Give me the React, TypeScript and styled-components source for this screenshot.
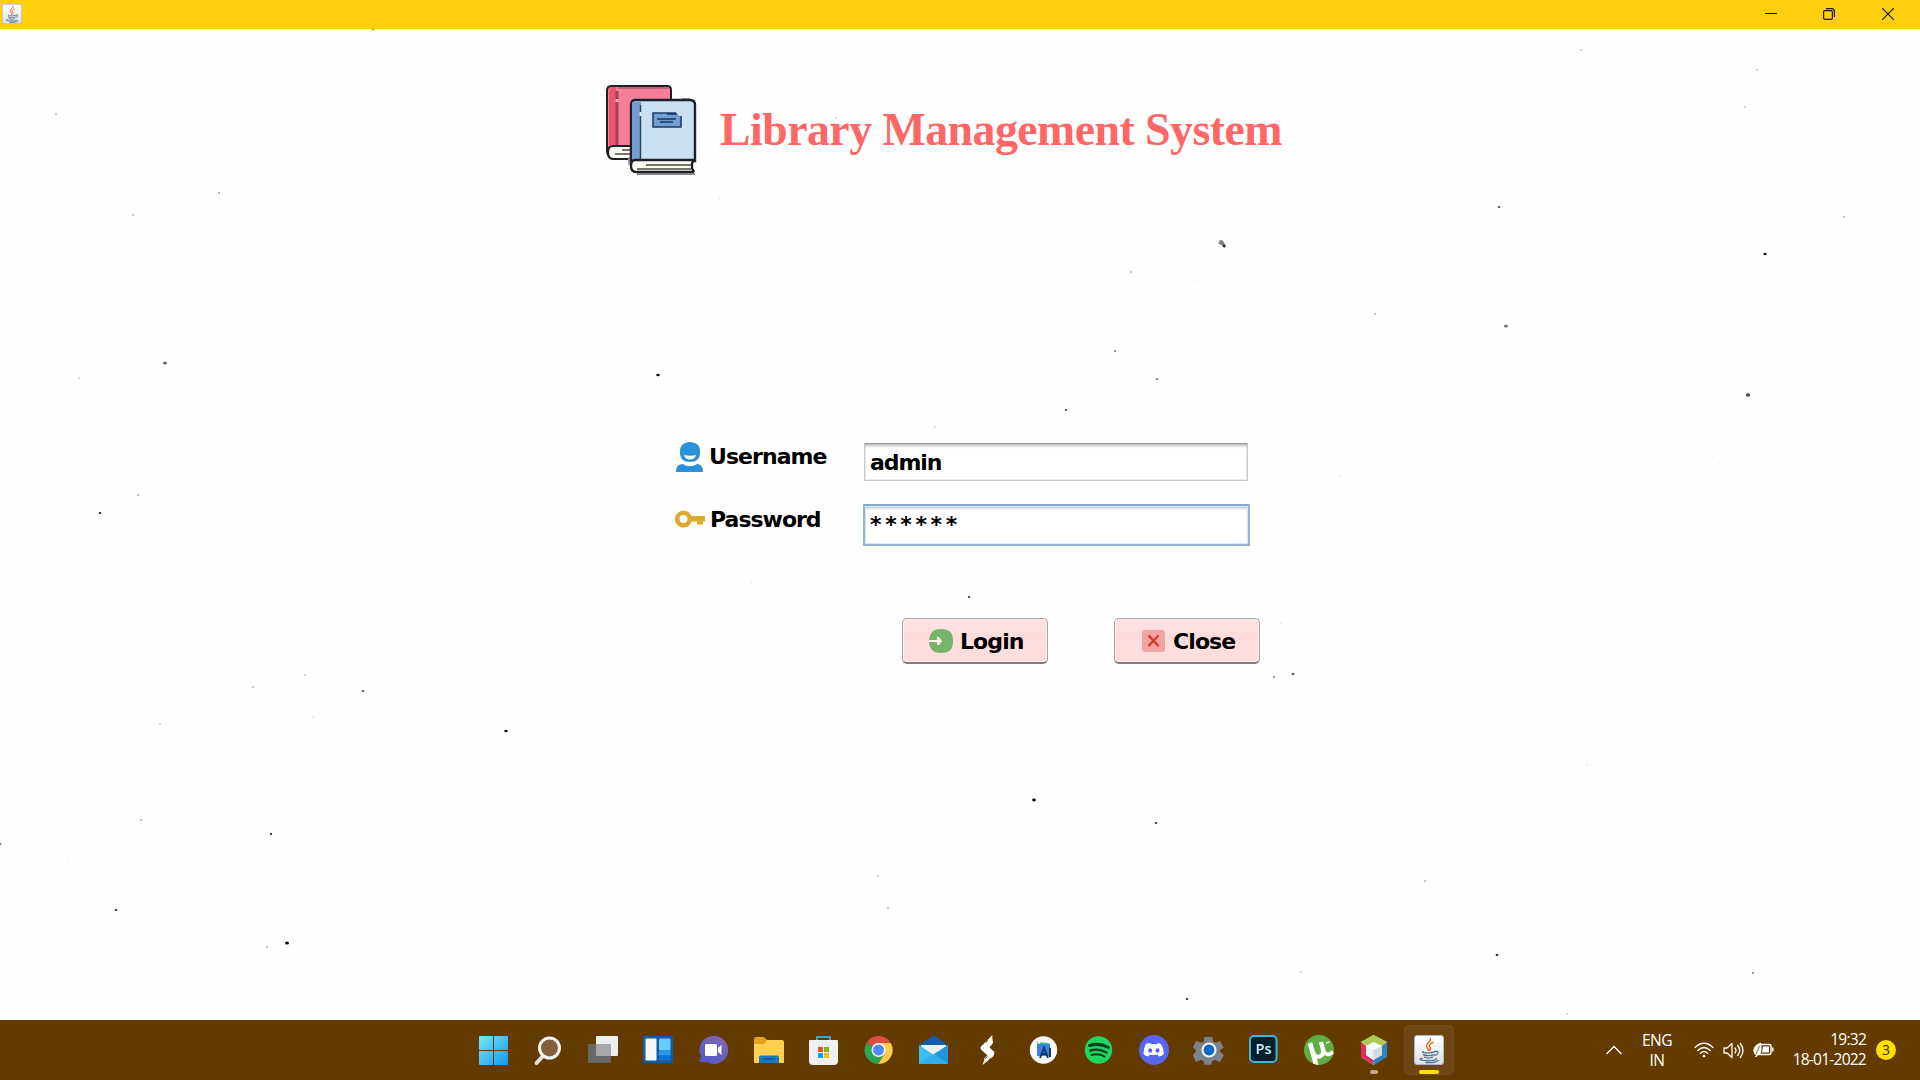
import React from "react";
import styled, { createGlobalStyle } from "styled-components";

const Global = createGlobalStyle`
  * { box-sizing: border-box; }
  body { margin: 0; background: #fefefe; overflow: hidden; }
  svg { display: block; flex: none; }
`;

const uiFont = `"DejaVu Sans", Verdana, sans-serif`;
const trayFont = `"Open Sans", "Noto Sans", sans-serif`;

const Screen = styled.div`
  width: 1920px;
  height: 1080px;
  display: flex;
  flex-direction: column;
  position: relative;
  background: #fefefe;
`;

const TitleBar = styled.header`
  height: 29px;
  flex: none;
  background: #ffcf0d;
  display: flex;
  justify-content: space-between;
  padding: 4px 3px 0 2px;
`;

const WindowButtons = styled.div`
  display: flex;
  margin-top: -4px;
`;

const WindowButton = styled.button`
  width: 58.5px;
  height: 28px;
  border: 0;
  padding: 0;
  background: transparent;
  display: flex;
  align-items: center;
  justify-content: center;
`;

const Body = styled.main`
  flex: 1;
  min-height: 0;
  display: flex;
  flex-direction: column;
`;

const Brand = styled.div`
  display: flex;
  padding: 55px 0 0 606px;
  height: 180px;
  gap: 23px;
`;

const Title = styled.h1`
  margin: 20px 0 0;
  font: bold 45.8px/52px "Liberation Serif", "Times New Roman", serif;
  letter-spacing: -0.52px;
  color: #ff6666;
  white-space: nowrap;
`;

const Form = styled.form`
  padding: 232px 0 0 675px;
  display: flex;
  flex-direction: column;
`;

const FormRow = styled.div<{ $h: number }>`
  display: grid;
  grid-template-columns: 188px 388px;
  height: ${(p) => p.$h}px;
  align-items: start;
`;

const Label = styled.label<{ $spacing: number }>`
  display: flex;
  gap: 5px;
  height: 32px;
  align-items: center;
  font: bold 22px/32px ${uiFont};
  letter-spacing: ${(p) => p.$spacing}px;
  color: #000;
`;

const Field = styled.div<{ $focused?: boolean }>`
  width: ${(p) => (p.$focused ? 387 : 384)}px;
  height: ${(p) => (p.$focused ? 42 : 38)}px;
  margin: ${(p) => (p.$focused ? "0" : "2px 0 0 1px")};
  padding: ${(p) => (p.$focused ? "5px 5px" : "5px 5px")};
  border: ${(p) => (p.$focused ? "2px solid #93b3d3" : "1px solid #c9c9c9")};
  border-top-color: ${(p) => (p.$focused ? "#86a8cb" : "#949494")};
  outline: ${(p) => (p.$focused ? "1px solid #dbe8f3" : "none")};
  outline-offset: -3px;
  box-shadow: inset 0 3px 3px -1px ${(p) => (p.$focused ? "#b0b6bd" : "#bdbdbd")}, inset 0 0 0 1px #eeeeee;
  background: #fff;
  font: bold 22px/28px ${uiFont};
  letter-spacing: ${(p) => (p.$focused ? 3.65 : -1.1)}px;
  color: #000;
`;

const Actions = styled.div`
  display: flex;
  gap: 66px;
  padding: 54px 0 0 227px;
`;

const Button = styled.button<{ $left: number; $gap: number }>`
  width: 146px;
  height: 46px;
  display: flex;
  align-items: center;
  gap: ${(p) => p.$gap}px;
  padding: 2px 0 0 ${(p) => p.$left}px;
  border: 1.5px solid #a8a0a2;
  border-bottom: 2px solid #85797b;
  border-radius: 5px;
  background: linear-gradient(#ffe4e4, #ffdada 48%, #ffdfdf 52%, #ffdcdc);
  box-shadow: inset 0 0 0 1px #ffeeee;
  font: bold 22px/30px ${uiFont};
  letter-spacing: -0.9px;
  color: #000;
  & > svg { margin-top: -2px; }
`;

const Specks = styled.svg`
  position: absolute;
  left: 0;
  top: 29px;
  pointer-events: none;
`;

const Taskbar = styled.footer`
  height: 60px;
  flex: none;
  background: #633a00;
  display: flex;
  justify-content: space-between;
`;

const Apps = styled.nav`
  display: flex;
  padding: 5px 0 0 469px;
  gap: 5px;
`;

const AppSlot = styled.div<{ $active?: boolean }>`
  width: 50px;
  height: 50px;
  border-radius: 5px;
  background: ${(p) => (p.$active ? "#6d4613" : "transparent")};
  box-shadow: ${(p) => (p.$active ? "inset 0 0 0 1px #734e1d" : "none")};
  display: flex;
  flex-direction: column;
  align-items: center;
  padding-top: 9px;
`;

const Indicator = styled.span<{ $active?: boolean }>`
  margin-top: 4px;
  width: ${(p) => (p.$active ? 20 : 8)}px;
  height: 4px;
  border-radius: 2px;
  background: ${(p) => (p.$active ? "#ffe100" : "#c0a68a")};
`;

const Tray = styled.div`
  display: flex;
  align-items: center;
  padding-right: 24px;
  color: #fff;
  font: 15.6px/20px ${trayFont};
`;

const Language = styled.div`
  width: 40px;
  margin: -1px 17px 0 15px;
  text-align: center;
  letter-spacing: -0.6px;
`;

const Status = styled.div`
  display: flex;
  gap: 9px;
`;

const Clock = styled.div`
  width: 92px;
  margin-top: -2px;
  text-align: right;
  letter-spacing: -0.8px;
  white-space: nowrap;
`;

const Badge = styled.span`
  width: 20px;
  height: 20px;
  margin-left: 10px;
  border-radius: 50%;
  background: #ffe100;
  color: #3c2c00;
  font: 14px/20px ${trayFont};
  text-align: center;
`;

const BooksLogo = () => (
  <svg width="91" height="92" viewBox="0 0 91 92">
    <path d="M5 2h56q4 0 4 4v66H6q-5 0-5-5V7q0-5 4-5Z" fill="#f57f98" stroke="#1d2029" strokeWidth="2" />
    <path d="M4 3h6v58H3V8Z" fill="#f0536c" />
    <path d="M11 7v54" stroke="#a83e56" strokeWidth="3" />
    <path d="M11 15v3" stroke="#ffb5c4" strokeWidth="3" />
    <path d="M12 4h50" stroke="#bc6377" strokeWidth="2" />
    <path d="M25 62H7q-5 0-5 6 0 7 5 7h18Z" fill="#fffdf0" stroke="#1d2029" strokeWidth="2.2" />
    <path d="M16 66h10M9 70h16" stroke="#77756e" strokeWidth="2" />
    <path d="M76 15h8M23 73v8" stroke="#9b9ba1" strokeWidth="2" />
    <path d="M29 16h55q5 0 5 5v56H25V21q0-5 4-5Z" fill="#c9dff2" stroke="#1d2029" strokeWidth="2.4" />
    <path d="M26 18h9v59h-9Z" fill="#719dd0" />
    <path d="M34.500 21v56" stroke="#28405f" strokeWidth="1.400" />
    <path d="M34.500 28v4" stroke="#dfeefb" strokeWidth="2" />
    <path d="M47 29h23l5 4v10H47Z" fill="#719dd0" />
    <path d="M70 29H47v14h28V32" fill="none" stroke="#1d3d66" strokeWidth="1.600" />
    <path d="M61 30h10M51 35h19M54 38h13" stroke="#17345c" strokeWidth="1.500" />
    <path d="M89 76H29q-4 0-4 6 0 6 5 6h59l-3-4v-5Z" fill="#fffff5" />
    <path d="M89 76H29q-4 0-4 6 0 6 5 6h58M88 88l-2-4v-5l2-3" fill="none" stroke="#1d2029" strokeWidth="2.400" />
    <path d="M40 81h45M31 85h54" stroke="#77756e" strokeWidth="2" />
    <path d="M31 90h58" stroke="#85858b" strokeWidth="2" />
  </svg>
);

const UserIcon = () => (
  <svg width="29" height="32" viewBox="0 0 29 32">
    <path d="M15 1C9 1 5 4.500 5 10v2c0 6 4 9 10 9s10-3 10-9v-2c0-5.500-4-9-10-9Z" fill="#2b91dc" />
    <path d="M9 14q6 1.400 12 0c-.7 3-3 4.500-6 4.500S9.700 17 9 14Z" fill="#fff" />
    <path d="M1 31c0-5 2-8 7-8 4 3 10 3 14 0 4 0 6 3 6 8Z" fill="#2b91dc" />
  </svg>
);

const KeyIcon = () => (
  <svg width="30" height="20" viewBox="0 0 30 20">
    <circle cx="8.500" cy="9" r="6.300" fill="none" stroke="#dbab2f" strokeWidth="4.600" />
    <path d="M15 6h15v5.500h-2v3h-6v-3h-7Z" fill="#dbab2f" />
  </svg>
);

const LoginIcon = () => (
  <svg width="24" height="24" viewBox="0 0 24 24">
    <path d="M12 0c9 0 12 4 12 12s-3 12-12 12C5 24 1 21 0 14V11C1 3 5 0 12 0Z" fill="#77b467" />
    <path d="M0 11h8V8h2l3 4-3 4H8v-3H0Z" fill="#fff2ea" />
  </svg>
);

const CloseIcon = () => (
  <svg width="23" height="22" viewBox="0 0 23 22">
    <rect width="23" height="22" rx="3" fill="#f3a4a0" />
    <path d="m6.500 5.500 10 10.500M16.500 5.500 6.500 16" stroke="#d7382e" strokeWidth="2.400" />
  </svg>
);

const JavaIcon = ({ size }: { size: number }) => (
  <svg width={size} height={size} viewBox="0 0 30 30">
    <defs>
      <linearGradient id="javaTile" x2="0" y2="1">
        <stop stopColor="#ffffff" />
        <stop offset="1" stopColor="#dedfe3" />
      </linearGradient>
    </defs>
    <rect x=".5" y=".5" width="29" height="29" rx="2.500" fill="url(#javaTile)" stroke="#a9b9c9" />
    <g fill="none" strokeLinecap="round">
      <path d="M16.500 3.500c1 3.500-5 4.500-4 8 .4 1.500 2 2 2 4M19 7.500c-3 1-5 3-3 5 1 1.200.5 2-.5 3" stroke="#e5702c" strokeWidth="1.500" />
      <path d="M9 16.500c-3 1.500 9 2 12 .2M9.500 19.500c1 1.400 8 1.500 10.500.2M10.500 22.200c2 1 6 1 8 0M21.500 16.300c3.500-.5 3 3-.5 4M8 23.300c-6 1.500 4 2.700 9 2.300 4-.3 6-1 5-2M12 27.500c5 .5 10-.3 12-2" stroke="#4f7592" strokeWidth="1.350" />
    </g>
  </svg>
);

const icons: React.ReactNode[] = [
  <>
    <defs>
      <linearGradient id="win" x1="1" y1="2" x2="30" y2="31" gradientUnits="userSpaceOnUse">
        <stop stopColor="#74e8ff" />
        <stop offset="1" stopColor="#1597f3" />
      </linearGradient>
    </defs>
    <path d="M1 3q0-1 1-1h13v14H1ZM16 2h13q1 0 1 1v13H16ZM1 17h14v14H2q-1 0-1-1ZM16 17h14v13q0 1-1 1H16Z" fill="url(#win)" />
  </>,
  <>
    <path d="m10 22-6.500 7" stroke="#e1dfdc" strokeWidth="4" strokeLinecap="round" />
    <circle cx="16.500" cy="14" r="10" fill="#83603a" stroke="#f5f4f2" strokeWidth="3" />
  </>,
  <>
    <path d="M8 3q0-1 1-1h20q1 0 1 1v18q0 1-1 1H8Z" fill="#eeeeee" />
    <path d="M0 11q0-1 1-1h21q1 0 1 1v17q0 1-1 1H1q-1 0-1-1Z" fill="#676767" />
    <path d="M8 10h14q1 0 1 1v11H8Z" fill="#a7a7a7" />
  </>,
  <>
    <rect x="0" y="2" width="30" height="27" rx="1.500" fill="#105ba5" />
    <rect x="2.500" y="4.500" width="11" height="22" rx="1" fill="#f5f7fa" />
    <rect x="16" y="4.500" width="11.500" height="12" rx="1" fill="#64ccff" />
    <rect x="16" y="17" width="11.500" height="4.500" fill="#289bed" />
    <rect x="16" y="22" width="11.500" height="4.500" rx="1" fill="#1373ca" />
  </>,
  <>
    <defs>
      <linearGradient id="chat" x1=".8" x2=".2" y2="1">
        <stop stopColor="#8368b1" />
        <stop offset="1" stopColor="#5059cb" />
      </linearGradient>
    </defs>
    <path d="M16 2a14 14 0 1 1-7 26H2q-1 0-.5-1.500l1.500-4A14 14 0 0 1 16 2Z" fill="url(#chat)" />
    <rect x="7" y="10" width="12" height="12" rx="1.500" fill="#fff" />
    <path d="m20 14 3.500-3v10L20 18Z" fill="#fff" />
  </>,
  <>
    <path d="M1 5q0-2 2-2h8l3 3v5H1Z" fill="#e4a11b" />
    <path d="M1 10h10l3-4h15q2 0 2 2v21H2q-1 0-1-1Z" fill="#ffd050" />
    <path d="M6 29v-6q0-1.500 1.500-1.500h17q1.500 0 1.500 1.500v6Z" fill="#1579c4" />
    <path d="M10 25h12" stroke="#0c4d8c" strokeWidth="1.300" />
  </>,
  <>
    <path d="M9 7V3h13v4" fill="none" stroke="#35a7d4" strokeWidth="2" />
    <path d="M1 7q0-1 1-1h27q1 0 1 1v20q0 4-4 4H5q-4 0-4-4Z" fill="#f0f0f0" />
    <path d="M10 13h5v5h-5Z" fill="#ee5128" />
    <path d="M16 13h5v5h-5Z" fill="#7eb900" />
    <path d="M10 19h5v5h-5Z" fill="#08a4ed" />
    <path d="M16 19h5v5h-5Z" fill="#fdb800" />
  </>,
  <>
    <path d="M15.500 16 3.400 9A14 14 0 0 1 27.700 9Z" fill="#dc4c40" />
    <path d="M15.500 16 3.400 9a14 14 0 0 0 12.100 21l6-10.500Z" fill="#30a354" />
    <path d="M15.500 9h12.200a14 14 0 0 1-12.200 21l6-10.500Z" fill="#fdce4d" />
    <circle cx="15.500" cy="16" r="7" fill="#f6f6f4" />
    <circle cx="15.500" cy="16" r="5.500" fill="#4c8bf5" />
  </>,
  <>
    <path d="m1 11 14-9q1-.5 2 0l13 9v5H1Z" fill="#105eb2" />
    <path d="M3 11h25v7l-12 5L3 17Z" fill="#f2f2f2" />
    <path d="M1 11v18q0 1 1 1h28V11L16 21Z" fill="#3abdf1" />
    <path d="m16 20 14 10V11Z" fill="#2495dc" />
    <path d="M1 30 16 20l14 10Z" fill="#35adec" />
  </>,
  <>
    <path d="M19 1q0 4-3 8h-2l-6 4 1 3 8 7 4-3-5-6 4-5Z" fill="#fff" />
    <path d="m10 31 3-8 8-3 .500-2-8-7-4 3 6 6-4 4Z" fill="#fff" />
    <path d="M8.500 12q-2 2 0 4l7 6-4 4-2 5 10-8q3-3 0-5l-5-5 3-4 2-8Z" fill="#fff" />
    <path d="m13 9 1.500-3M15.500 27l2-3" stroke="#633a00" strokeWidth=".8" />
  </>,
  <>
    <circle cx="15.500" cy="16" r="13.700" fill="#fafafa" />
    <path d="m10 11 3-3 8 1 1 4H10Z" fill="#43cf82" />
    <path d="M9 10h13v12H9Z" fill="#3e80df" />
    <path d="m12 24 4-10 4 10M14 20h5M22 14v9" fill="none" stroke="#153766" strokeWidth="2" />
    <path d="m9 8 1 2" stroke="#34bd73" strokeWidth="1" />
  </>,
  <>
    <circle cx="15.500" cy="16" r="13.700" fill="#1ed660" />
    <g fill="none" stroke="#123e20" strokeLinecap="round">
      <path d="M6.500 11.500q10-3 19 2" strokeWidth="3" />
      <path d="M7.500 16.500q8-2.500 16 2" strokeWidth="2.400" />
      <path d="M8.500 21q7-2 13 1.500" strokeWidth="2" />
    </g>
  </>,
  <>
    <circle cx="16" cy="16" r="15" fill="#5865f2" />
    <path d="M12.500 9.500 11 9q-2.500.5-3.500 1.400Q5.500 15 5.500 20q2 2.300 5 2.500l1.200-2q4 1.200 8 0l1.200 2q3-.2 5-2.500 0-5-2.500-9.600Q22 9.300 20 9l-1 1.200q-3-.6-6 0Z" fill="#fff" />
    <ellipse cx="12.200" cy="16.500" rx="2" ry="2.200" fill="#5865f2" />
    <ellipse cx="19.500" cy="16.500" rx="2" ry="2.200" fill="#5865f2" />
  </>,
  <>
    <path d="M12 2h8l1 5 3 1 4-2 4 7-4 3v1l4 4-4 7-5-2-3 1-1 4h-7l-1-4-3-1-5 2-3-7 3-4v-1l-3-3 3-7 5 2 3-1Z" transform="translate(0 1) scale(.96)" fill="#7d838a" />
    <circle cx="16" cy="16" r="6.500" fill="#0869c3" stroke="#f0f1f3" strokeWidth="2.200" />
  </>,
  <>
    <rect x="2" y="2" width="26.500" height="26" rx="4" fill="#001e2b" stroke="#3cb5df" strokeWidth="2" />
    <text x="15.500" y="19.500" textAnchor="middle" fontFamily="Open Sans, sans-serif" fontWeight="600" fontSize="14.500" fill="#d5f1ff">Ps</text>
  </>,
  <>
    <defs>
      <clipPath id="torrentDisc"><circle cx="16" cy="16" r="15" /></clipPath>
    </defs>
    <circle cx="16" cy="16" r="15" fill="#61ad43" />
    <g clipPath="url(#torrentDisc)" fill="none" stroke="#fff">
      <path d="m7 9 6.500 23" strokeWidth="4.600" />
      <path d="M9.500 17q2 7 7 5.500 4.500-1.500 3.500-6.500L18 8" strokeWidth="4.200" />
      <path d="m24.500 8 .5 1M20 15q2 6 5.500 5.300 2.500-.5 4.500-2.300" strokeWidth="3.800" />
    </g>
  </>,
  <>
    <path d="m3 8 12.500-7L29 8v14l-13.500 9L3 23Z" fill="#e9e9e9" />
    <path d="m3 8 12.500-7L29 8l-5 4-8.500-4L8 12Z" fill="#aeca52" />
    <path d="m3 8 5 4v9l7.500 5v5L3 23Z" fill="#dd315d" />
    <path d="m29 8-5 4v9l-8.500 5v5L29 23Z" fill="#2a83c3" />
    <path d="m8 12 7.500-4 8.500 4-8.500 4Z" fill="#fff" />
    <path d="m8 12 7.500 4v10L8 21Z" fill="#eef2f4" />
    <path d="m24 12-8.500 4v10l8.500-5Z" fill="#d4dbe0" />
  </>,
];

/* x, y, radius, darkness of the dust marks in the paper backdrop */
const dust: [number, number, number, number][] = [
  [373, 0, 1.5, 0.5], [56, 85, 1.1, 0.35], [1581, 21, 0.9, 0.35], [1757, 41, 0.9, 0.35], [1745, 78, 0.9, 0.3],
  [480, 125, 0.7, 0.2], [219, 164, 1.1, 0.5], [133, 186, 0.9, 0.4], [719, 169, 0.8, 0.2], [1499, 178, 1.3, 0.7],
  [1844, 188, 0.9, 0.4], [1765, 225, 1.7, 0.9], [1131, 243, 1, 0.4], [1375, 285, 0.9, 0.4], [1506, 297, 2, 0.55],
  [1115, 322, 1.1, 0.7], [165, 334, 2, 0.6], [79, 349, 0.9, 0.3], [658, 346, 1.8, 0.95], [1157, 350, 1.5, 0.45],
  [1748, 366, 2.2, 0.7], [1066, 381, 1.2, 0.8], [935, 398, 0.9, 0.25], [138, 466, 1, 0.45], [100, 484, 1.4, 0.85],
  [1340, 446, 0.7, 0.25], [1713, 427, 0.7, 0.2], [751, 553, 0.7, 0.25], [969, 568, 1.2, 0.8], [305, 646, 0.9, 0.35],
  [253, 658, 1, 0.4], [363, 662, 1.4, 0.65], [1274, 648, 1, 0.7], [1293, 645, 1.6, 0.6], [1281, 594, 0.7, 0.25],
  [313, 688, 0.8, 0.25], [160, 695, 0.9, 0.3], [506, 702, 1.8, 0.9], [1034, 771, 1.9, 0.95], [141, 791, 1, 0.4],
  [271, 805, 1.2, 0.85], [1156, 794, 1.4, 0.75], [0, 815, 1.3, 0.6], [1587, 736, 0.7, 0.3], [1664, 710, 0.6, 0.2],
  [560, 768, 0.6, 0.2], [878, 847, 1, 0.25], [888, 879, 1, 0.4], [1425, 852, 1.1, 0.35], [116, 881, 1.4, 0.85],
  [67, 832, 0.8, 0.15], [287, 914, 2, 0.95], [267, 918, 1, 0.45], [1497, 926, 1.4, 0.9], [1753, 944, 1.2, 0.5],
  [1301, 943, 1, 0.3], [1187, 970, 1.2, 0.85], [1567, 985, 1, 0.3], [836, 89, 1, 0.25], [1195, 252, 0.7, 0.15],
];

export default function App() {
  return (
    <Screen>
      <Global />
      <TitleBar>
        <JavaIcon size={20} />
        <WindowButtons>
          <WindowButton aria-label="Minimize">
            <svg width="12" height="12"><path d="M0 5.500h12" stroke="#1d1700" /></svg>
          </WindowButton>
          <WindowButton aria-label="Restore">
            <svg width="12" height="12" viewBox="0 0 12 12" fill="none" stroke="#1d1700" strokeWidth="1.200">
              <rect x=".6" y="2.600" width="8.800" height="8.800" rx="1.300" />
              <path d="M3 .6h5.500q2.900 0 2.900 2.900V9" />
            </svg>
          </WindowButton>
          <WindowButton aria-label="Close">
            <svg width="12" height="12"><path d="m0 0 12 12M12 0 0 12" stroke="#1d1700" strokeWidth="1.200" /></svg>
          </WindowButton>
        </WindowButtons>
      </TitleBar>

      <Body>
        <Brand>
          <BooksLogo />
          <Title>Library Management System</Title>
        </Brand>
        <Form>
          <FormRow $h={63}>
            <Label $spacing={-0.95}><UserIcon />Username</Label>
            <Field>admin</Field>
          </FormRow>
          <FormRow $h={60}>
            <Label $spacing={-1}><KeyIcon />Password</Label>
            <Field $focused>******</Field>
          </FormRow>
          <Actions>
            <Button type="button" $left={26} $gap={7}><LoginIcon />Login</Button>
            <Button type="button" $left={27} $gap={8}><CloseIcon />Close</Button>
          </Actions>
        </Form>
      </Body>

      <Specks width="1920" height="991" viewBox="0 0 1920 991">
        {dust.map(([x, y, r, o], i) => (
          <ellipse key={i} cx={x} cy={y} rx={r} ry={r * 0.75} fill="#000" opacity={o} />
        ))}
        <path d="M1219 212q2-2 4 0l3 5-1.500 2-3-3-3-1Z" fill="#7c8381" />
        <circle cx="1224" cy="217" r="1.300" fill="#222" />
      </Specks>

      <Taskbar>
        <Apps>
          {icons.map((icon, i) => (
            <AppSlot key={i}>
              <svg width="32" height="32" viewBox="0 0 32 32">{icon}</svg>
              {i === 16 && <Indicator />}
            </AppSlot>
          ))}
          <AppSlot $active>
            <svg width="32" height="32" viewBox="-1 -1 32 32"><JavaIcon size={30} /></svg>
            <Indicator $active />
          </AppSlot>
        </Apps>
        <Tray>
          <svg width="16" height="10" fill="none" stroke="#fff" strokeWidth="1.300"><path d="m.5 9 7.500-7.500L15.500 9" /></svg>
          <Language>ENG<br />IN</Language>
          <Status>
            <svg width="20" height="16" viewBox="0 0 20 16" fill="none" stroke="#fff" strokeWidth="1.400" strokeLinecap="round">
              <path d="M1 5.500q9-8.500 18 0M3.800 8.500q6.200-6 12.400 0M6.500 11.300q3.500-3.400 7 0" />
              <circle cx="10" cy="14" r="1.300" fill="#fff" stroke="none" />
            </svg>
            <svg width="21" height="17" viewBox="0 0 21 17" fill="none" stroke="#fff" strokeWidth="1.300" strokeLinecap="round" strokeLinejoin="round">
              <path d="M1 6v5h3l5 4.500v-14L4 6ZM12 6q2 2.500 0 5M14.700 3.500q4 5 0 10M17.300 1.500q5.400 7 0 14" />
            </svg>
            <svg width="21" height="15" viewBox="0 0 21 15">
              <path d="M8 2.500h8q2 0 2 2v6q0 2-2 2H7" fill="none" stroke="#fff" strokeWidth="1.400" />
              <path d="M10 4.500h6v6H9ZM19 5.500h1.500v4H19Z" fill="#fff" />
              <path d="M8 .5Q0 3 .3 9q.2 3 3 4L2 15h1.500l1.300-1.500Q10 13 8 .5Z" fill="#fff" />
              <path d="M6.500 4 3 12" stroke="#633a00" strokeWidth=".8" />
            </svg>
          </Status>
          <Clock>19:32<br />18-01-2022</Clock>
          <Badge>3</Badge>
        </Tray>
      </Taskbar>
    </Screen>
  );
}
